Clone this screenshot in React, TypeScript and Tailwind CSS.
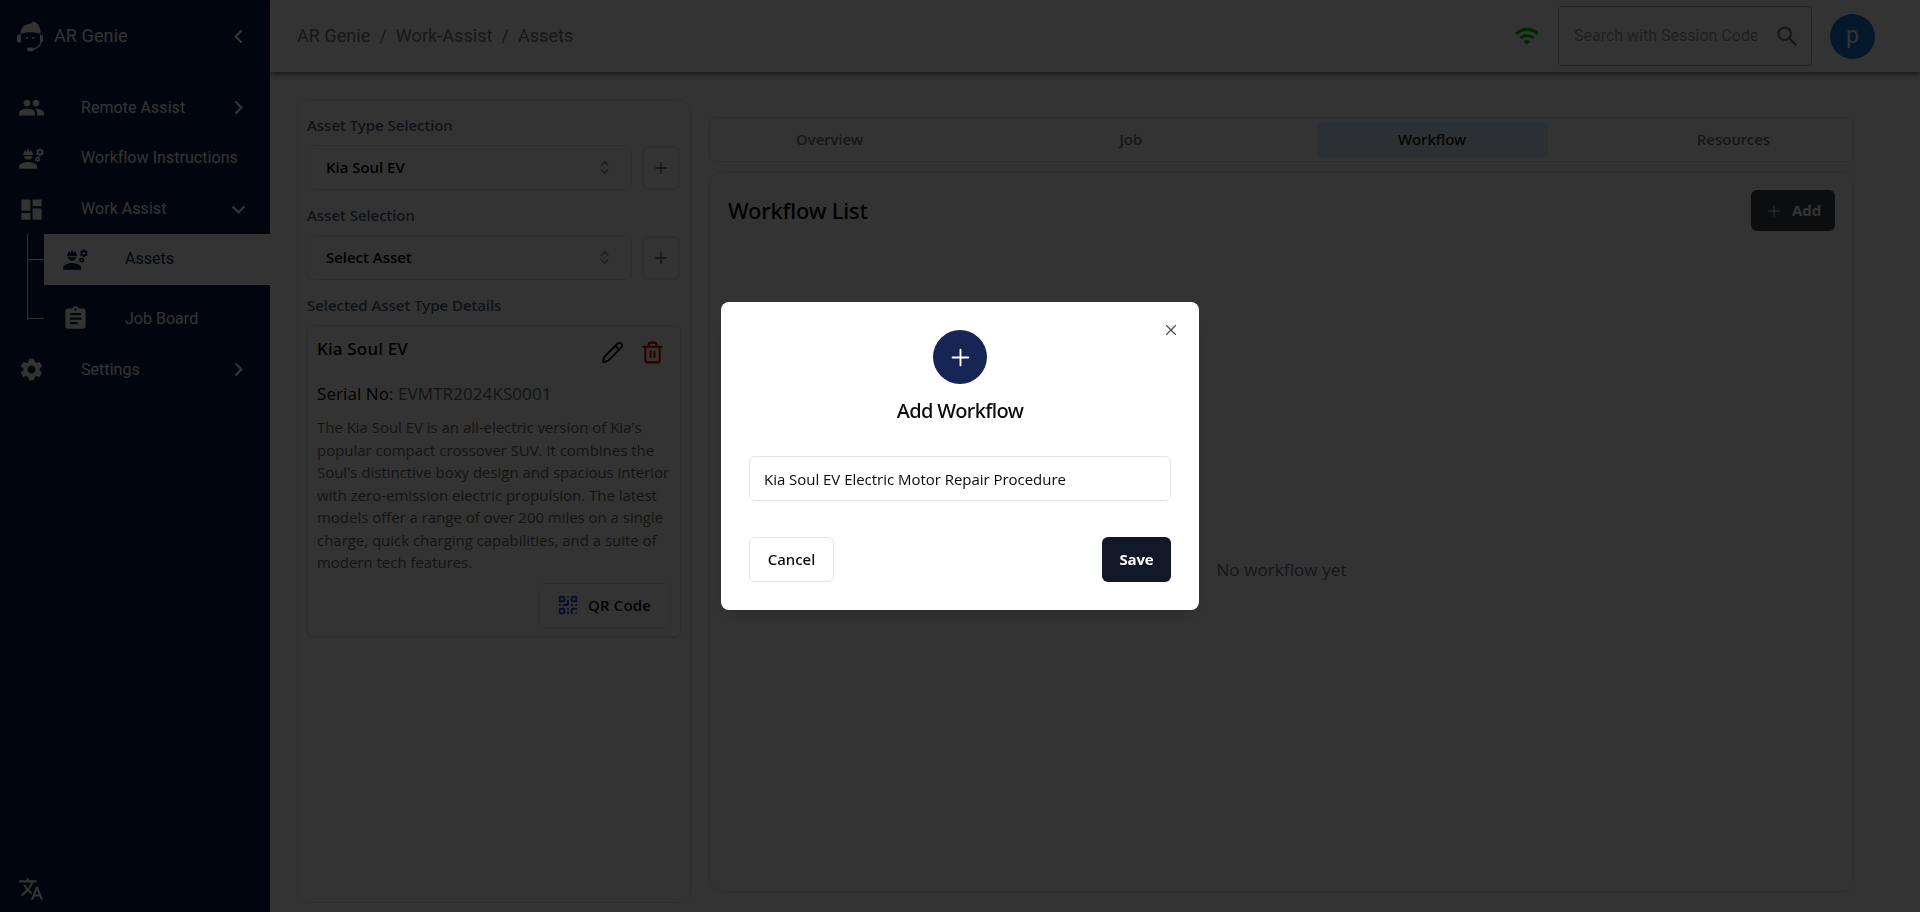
import React from 'react';
import { MdPeople, MdEngineering, MdDashboard, MdAssignment, MdSettings, MdTranslate, MdWifi, MdSearch, MdChevronLeft, MdChevronRight, MdExpandMore } from 'react-icons/md';
import { Plus, X, Pencil, QrCode, ChevronsUpDown } from 'lucide-react';

function Logo() {
  return (
    <svg width="26" height="31" viewBox="0 0 26 31" className="shrink-0" fill="currentColor">
      <path d="M3.500 13C3.500 7.500 6.500 4 11 3.200C13.500 2.800 15 2.200 16 0.500C18 1 19.500 2 20.500 3C22.500 5 23.600 8.500 23.600 13C17.500 10.700 9.500 10.700 3.500 13Z" />
      <path d="M0 15.500C0 13.800 2.200 13.300 4 13.700V21.300C2 22 0 21.300 0 19.500Z" />
      <path d="M23 13.700C25 13.500 26 14.300 26 15.800V19.300C26 20.800 25 21.500 23 21.300Z" />
      <path d="M24 20.500C23.500 24.500 21 27.400 15 28.300" fill="none" stroke="currentColor" strokeWidth="1.400" />
      <rect x="10" y="26.600" width="6.800" height="3.600" rx="1.800" />
      <circle cx="10" cy="17" r="1" />
      <path d="M15 17.600Q16.500 15.900 18 17.100" fill="none" stroke="currentColor" strokeWidth="1.200" />
    </svg>
  );
}

function TrashIcon() {
  return (
    <svg width="23" height="23" viewBox="0 0 24 24" fill="none" stroke="currentColor" strokeWidth="2.100" strokeLinecap="round" strokeLinejoin="round" className="text-[#e00000]">
      <path d="M2.500 6H21.500" />
      <path d="M4.500 6V20.500a1.800 1.800 0 0 0 1.800 1.800H17.700a1.800 1.800 0 0 0 1.800-1.800V6" />
      <path d="M8 6V3.500a1.800 1.800 0 0 1 1.800-1.800H14.200a1.800 1.800 0 0 1 1.800 1.800V6" />
      <path d="M10 11V17M14 11V17" />
    </svg>
  );
}

type NavProps = { icon: React.ReactNode; label: string; end?: React.ReactNode };

function NavItem({ icon, label, end }: NavProps) {
  return (
    <div className="flex h-[50.660px] items-center pt-px pl-[18px] pr-[18px]">
      <span className="w-[63px] text-[27px]">{icon}</span>
      <span className="flex-1 whitespace-nowrap text-[16px] tracking-[0.05px]">{label}</span>
      {end}
    </div>
  );
}

function Sidebar() {
  return (
    <aside className="flex w-[270px] shrink-0 flex-col bg-[#081e46] font-[Roboto,sans-serif] text-white">
      <div className="flex h-[72px] items-center pl-[17px] pr-[18px]">
        <Logo />
        <span className="-mt-[2px] ml-[11px] flex-1 text-[18px] tracking-[0.1px]">AR Genie</span>
        <MdChevronLeft size={27} />
      </div>
      <div className="mt-[10px]">
        <NavItem icon={<MdPeople />} label="Remote Assist" end={<MdChevronRight size={27} />} />
        <NavItem icon={<MdEngineering />} label="Workflow Instructions" />
        <NavItem icon={<MdDashboard />} label="Work Assist" end={<MdExpandMore size={27} />} />
      </div>
      <div className="flex">
        <div className="ml-[27px] h-[86px] w-[17px] border-l border-white">
          <div className="h-[26px] border-b border-white" />
          <div className="h-[59px] border-b border-white" />
        </div>
        <div className="flex-1">
          <div className="flex h-[51px] items-center bg-white pl-[18px] text-[#081e46]">
            <MdEngineering size={27} />
            <span className="-mt-px ml-[36px] text-[16px] tracking-[0.02px]">Assets</span>
          </div>
          <div className="mt-[8px] flex h-[51px] items-center pt-px pl-[18px]">
            <MdAssignment size={27} />
            <span className="ml-[36px] text-[16px] tracking-[0.02px]">Job Board</span>
          </div>
        </div>
      </div>
      <div>
        <NavItem icon={<MdSettings />} label="Settings" end={<MdChevronRight size={27} />} />
      </div>
      <MdTranslate size={26} className="mt-auto mb-[10px] ml-[18px]" />
    </aside>
  );
}

function Header() {
  return (
    <header className="flex h-[72px] shrink-0 items-center bg-white pr-[45px] pl-[27px] font-[Roboto,sans-serif] shadow-[0_2px_6px_rgba(0,0,0,0.6)]">
      <div className="-mt-[2px] flex flex-1 gap-[9px] text-[18px] tracking-[0.05px] text-[#777]">
        <span>AR Genie</span>
        <span>/</span>
        <span>Work-Assist</span>
        <span>/</span>
        <span>Assets</span>
      </div>
      <MdWifi size={26} className="mr-[18px] text-[#00c800]" />
      <div className="flex h-[60px] w-[254px] items-center rounded border border-[#bbb] pr-[10px] pl-[15px]">
        <span className="-mt-px w-[183px] overflow-hidden text-[16px] whitespace-nowrap text-[#a2a2a2]">Search with Session Code</span>
        <MdSearch size={27} className="ml-auto text-[#757575]" />
      </div>
      <div className="ml-[18px] flex size-[45px] items-center justify-center rounded-full bg-[#1976d2] text-[23px] text-white">p</div>
    </header>
  );
}

function SelectRow({ label, value }: { label: string; value: string }) {
  return (
    <div className="h-[90px]">
      <div className="h-[27px] font-['Noto_Sans',sans-serif] text-[15px] leading-[20px] font-medium text-[#475569]">{label}</div>
      <div className="mt-[3px] flex items-center gap-[10px]">
        <div className="flex h-[45px] w-[325px] items-center justify-between rounded-md border border-[#e5e7eb] pr-[18px] pl-[18px] text-[15px] font-semibold text-black">
          <span className="tracking-[-0.03px]">{value}</span>
          <ChevronsUpDown size={17} strokeWidth={1.700} className="text-[#777]" />
        </div>
        <div className="flex h-[44px] w-[38px] items-center justify-center rounded-md border-2 border-[#e8e8e8] pr-px text-[#555]">
          <Plus size={18} strokeWidth={1.700} />
        </div>
      </div>
    </div>
  );
}

function AssetPanel() {
  return (
    <section className="mt-[27px] h-[804px] w-[394px] rounded-xl border border-[#e5e7eb] px-[9px] pt-[15px]">
      <SelectRow label="Asset Type Selection" value="Kia Soul EV" />
      <SelectRow label="Asset Selection" value="Select Asset" />
      <div className="font-['Noto_Sans',sans-serif] text-[15px] leading-[20px] font-medium text-[#475569]">Selected Asset Type Details</div>
      <div className="mt-[10px] h-[312px] w-[374px] rounded-md border border-[#e5e7eb] px-[9px] shadow-sm">
        <div className="flex h-[28px] justify-between pt-[9px]">
          <h3 className="font-['Noto_Sans',sans-serif] text-[17px] leading-[28px] font-medium tracking-[0.2px] text-black">Kia Soul EV</h3>
          <div className="flex gap-[17px] pt-[6px] pr-[7px]">
            <Pencil size={23} className="text-black" />
            <TrashIcon />
          </div>
        </div>
        <div className="mt-[26px] text-[17px] leading-[27px] tracking-[0.08px] text-[#666]">
          <span className="text-black">Serial No:</span> EVMTR2024KS0001
        </div>
        <p className="mt-[9px] text-[15px] leading-[22.500px] tracking-[-0.03px] whitespace-nowrap text-[#666]">
          The Kia Soul EV is an all-electric version of Kia's<br />
          popular compact crossover SUV. It combines the<br />
          Soul's distinctive boxy design and spacious interior<br />
          with zero-emission electric propulsion. The latest<br />
          models offer a range of over 200 miles on a single<br />
          charge, quick charging capabilities, and a suite of<br />
          modern tech features.
        </p>
        <div className="mt-[9px] ml-auto flex h-[45px] w-[133px] items-center rounded-md border border-[#e5e7eb] pl-[18px] font-['Noto_Sans',sans-serif] text-[15px] font-medium text-black">
          <QrCode size={22} strokeWidth={2.200} className="mr-[9px] text-[#1d4ed8]" />
          <span className="tracking-[0.2px]">QR Code</span>
        </div>
      </div>
    </section>
  );
}

const tabs = ['Overview', 'Job', 'Workflow', 'Resources'];

function WorkflowPanel() {
  return (
    <section className="mt-[45px] ml-[18px] w-[1145px]">
      <div className="flex h-[45px] items-center justify-between rounded-md border border-[#e5e7eb] px-[4px] font-['Noto_Sans',sans-serif] text-[15px] font-medium text-[#6b6b6b]">
        {tabs.map((t) => (
          <div key={t} className={t === 'Workflow' ? 'flex h-[36px] w-[231px] items-center justify-center rounded-xs bg-[#dbeafe] text-[#111]' : 'flex h-[36px] w-[231px] items-center justify-center'}>
            {t}
          </div>
        ))}
      </div>
      <div className="mt-[9px] flex h-[721px] flex-col rounded-xl border border-[#e5e7eb] px-[18px] pt-[18px]">
        <div className="flex items-center justify-between">
          <h2 className="font-['Noto_Sans',sans-serif] text-[22px] font-medium tracking-[-0.2px] text-black">Workflow List</h2>
          <div className="flex h-[41px] w-[84px] items-center rounded-md bg-[#3b404b] pl-[14px] text-[15px] font-bold text-white">
            <Plus size={18} strokeWidth={1.500} className="mr-[9px]" />
            Add
          </div>
        </div>
        <div className="mt-[326px] text-center text-[17px] tracking-[0.1px] text-[#6b7280]">No workflow yet</div>
      </div>
    </section>
  );
}

function Dialog() {
  return (
    <div className="fixed inset-0 flex items-center justify-center bg-black/80">
      <div className="relative flex h-[308px] w-[478px] flex-col items-center rounded-lg bg-white px-[28px] pt-[28px] shadow-lg">
        <X size={18} strokeWidth={1.500} className="absolute top-[19px] right-[19px] text-[#444]" />
        <div className="flex size-[54px] items-center justify-center rounded-full bg-[#172554] text-white">
          <Plus size={27} strokeWidth={1.700} />
        </div>
        <h2 className="mt-[13px] font-['Noto_Sans',sans-serif] text-[20px] leading-[28px] font-medium tracking-[-0.600px] text-[#0a0a0a]">Add Workflow</h2>
        <div className="mt-[31px] flex h-[45px] w-full items-center rounded-md border border-[#e5e5e5] px-[14px] text-[15px] text-[#0a0a0a]">
          <span className="pt-px tracking-[-0.03px]">Kia Soul EV Electric Motor Repair Procedure</span>
        </div>
        <div className="mt-[36px] flex w-full justify-between text-[15px]">
          <button className="h-[45px] w-[85px] rounded-md border border-[#e5e5e5] font-['Noto_Sans',sans-serif] font-medium text-[#0a0a0a]">Cancel</button>
          <button className="h-[45px] w-[69px] rounded-md bg-[#111827] font-bold tracking-[-0.2px] text-white">Save</button>
        </div>
      </div>
    </div>
  );
}

export default function App() {
  return (
    <div className="flex h-[912px] w-[1920px] overflow-hidden bg-white font-['Open_Sans','Noto_Sans',sans-serif]">
      <Sidebar />
      <div className="flex flex-1 flex-col">
        <Header />
        <main className="flex flex-1 pl-[27px]">
          <AssetPanel />
          <WorkflowPanel />
        </main>
      </div>
      <Dialog />
    </div>
  );
}
